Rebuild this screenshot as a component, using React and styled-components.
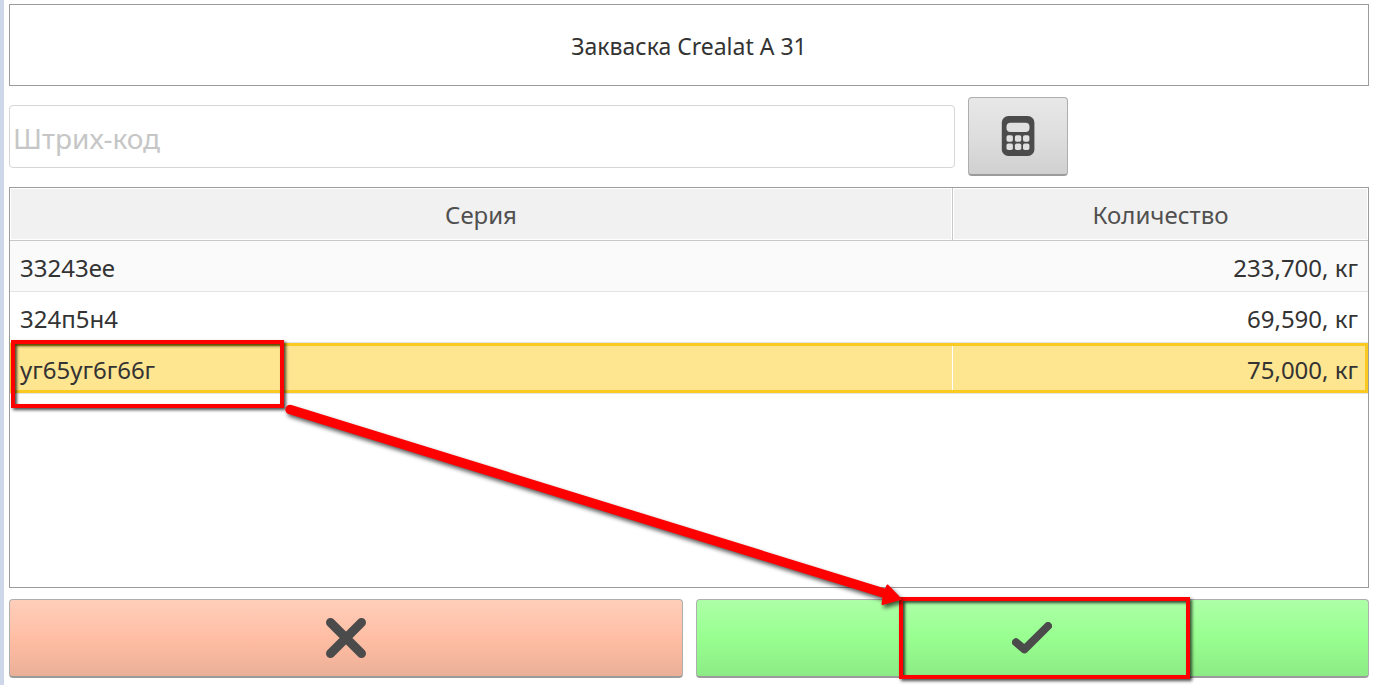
import React from "react";
import styled, { createGlobalStyle } from "styled-components";

const GlobalStyle = createGlobalStyle`
  *, *::before, *::after { box-sizing: border-box; }
  html, body, #root { height: 100%; }
  body {
    margin: 0;
    background: #fff;
    color: #333;
    font-family: "Segoe UI", "Noto Sans", "Open Sans", sans-serif;
  }
`;

const Page = styled.main`
  position: relative;
  display: flex;
  flex-direction: column;
  min-height: 100%;
  padding: 4px 6px 7px 5px;
  border-left: 4px solid #cdd7e9;
  overflow: hidden;
`;

const Title = styled.h1`
  display: flex;
  align-items: center;
  justify-content: center;
  height: 82px;
  margin: 0;
  padding-top: 2px;
  border: 1px solid #9c9c9c;
  font-size: 23px;
  line-height: 30px;
  font-weight: 400;
`;

const SearchBar = styled.div`
  display: flex;
  align-items: center;
  gap: 13px;
  margin: 11px 0;
`;

const BarcodeInput = styled.input`
  flex: 0 1 946px;
  min-width: 0;
  height: 63px;
  padding: 2px 3px 0;
  border: 1px solid #d6d6d6;
  border-radius: 4px;
  font-family: inherit;
  font-size: 28px;
  color: #333;
  outline: none;
  &::placeholder { color: #c6c6c6; opacity: 1; }
`;

const tones = {
  grey: ["#e8e8e8", "#dedede", "#d0d0d0"],
  red: ["#ffceba", "#ffbea4", "#ebaf97"],
  green: ["#adffa7", "#98ff90", "#8ceb85"],
};

const Button = styled.button`
  display: flex;
  align-items: center;
  justify-content: center;
  flex: ${(p) => (p.$wide ? "1 1 0" : "0 0 100px")};
  height: 79px;
  padding: 0;
  border: 1px solid #aeaeae;
  border-bottom: 2px solid #9b9b9b;
  border-radius: 4px;
  background: linear-gradient(
    ${(p) => `${tones[p.$tone][0]}, ${tones[p.$tone][1]} 50%, ${tones[p.$tone][2]}`}
  );
`;

const TablePanel = styled.section`
  flex: 1;
  min-height: 401px;
  border: 1px solid #9c9c9c;
`;

const Table = styled.table`
  width: 100%;
  table-layout: fixed;
  border-collapse: separate;
  border-spacing: 0;
  font-size: 24px;
  line-height: 32px;
`;

const SeriesCol = styled.col`
  width: 943px;
`;

const HeadCell = styled.th`
  height: 53px;
  padding: 1px 0 0;
  background: #f1f1f1;
  border-bottom: 1px solid #c8c8c8;
  box-shadow: inset 0 0 0 1px #fff;
  color: #505050;
  font-weight: 400;
  &:first-child { border-right: 1px solid #c8c8c8; }
`;

const Cell = styled.td`
  height: 51px;
  padding: 4px 10px 0;
  border-bottom: 1px solid #e4e4e4;
  text-align: ${(p) => (p.$number ? "right" : "left")};
`;

const Row = styled.tr`
  background: ${(p) => (p.$striped ? "#fafafa" : "#fff")};
  ${(p) =>
    p.$selected &&
    `
    ${Cell} { background: #fee590; }
    ${Cell}:first-child {
      background: linear-gradient(#fff, #fff) right / 1px 100% no-repeat #fee590;
      box-shadow: inset 3px 3px #fbca22, inset 0 -3px #fbca22;
    }
    ${Cell}:last-child { box-shadow: inset -3px 3px #fbca22, inset 0 -3px #fbca22; }
  `}
`;

const Actions = styled.footer`
  display: flex;
  gap: 13px;
  margin-top: 11px;
`;

const Frame = styled.div`
  position: absolute;
  border: 4px solid #f00;
  pointer-events: none;
  box-shadow: 2px 2px 3px rgba(0, 0, 0, 0.7), inset 2px 2px 3px rgba(0, 0, 0, 0.7);
`;

const SeriesFrame = styled(Frame)`
  top: 340px;
  left: 7px;
  width: 273px;
  height: 68px;
`;

const ConfirmFrame = styled(Frame)`
  top: 597px;
  left: 895px;
  width: 291px;
  height: 82px;
`;

const Arrow = styled.svg`
  position: absolute;
  top: 400px;
  left: 276px;
  pointer-events: none;
  filter: drop-shadow(2px 3px 2px rgba(0, 0, 0, 0.65));
`;

const CalculatorIcon = () => (
  <svg width="34" height="40" viewBox="0 0 34 40" aria-hidden="true">
    <rect x="0.8" width="32.6" height="40" rx="6.5" fill="#4b4b4b" />
    <g fill="#e0e0e0">
      <rect x="5.5" y="6.8" width="23" height="9.2" rx="4" />
      {[19.2, 27.4].map((y) =>
        [5.5, 13.9, 22].map((x) => (
          <rect key={`${x}-${y}`} x={x} y={y} width="6.4" height="6.6" rx="1.8" />
        ))
      )}
    </g>
  </svg>
);

const CrossIcon = () => (
  <svg width="40" height="40" viewBox="0 0 40 40" aria-hidden="true">
    <path d="M4.5 4.5 35.5 35.5M35.5 4.5 4.5 35.5" stroke="#4b4b4b" strokeWidth="9" strokeLinecap="round" />
  </svg>
);

const CheckIcon = () => (
  <svg width="40" height="32" viewBox="0 0 40 32" fill="none" aria-hidden="true">
    <path d="M4 20.3 12.4 27.4 36 4" stroke="#4b4b4b" strokeWidth="8" strokeLinecap="round" strokeLinejoin="round" />
  </svg>
);

const rows = [
  { series: "33243ее", amount: "233,700, кг" },
  { series: "324п5н4", amount: "69,590, кг" },
  { series: "уг65уг6г66г", amount: "75,000, кг", selected: true },
];

export default function App() {
  return (
    <>
      <GlobalStyle />
      <Page>
        <Title>Закваска Crealat A 31</Title>
        <SearchBar>
          <BarcodeInput type="text" placeholder="Штрих-код" aria-label="Штрих-код" />
          <Button type="button" $tone="grey" aria-label="Калькулятор">
            <CalculatorIcon />
          </Button>
        </SearchBar>
        <TablePanel>
          <Table>
            <colgroup>
              <SeriesCol />
              <col />
            </colgroup>
            <thead>
              <tr>
                <HeadCell scope="col">Серия</HeadCell>
                <HeadCell scope="col">Количество</HeadCell>
              </tr>
            </thead>
            <tbody>
              {rows.map((row, i) => (
                <Row key={row.series} $selected={row.selected} $striped={i % 2 === 0}>
                  <Cell>{row.series}</Cell>
                  <Cell $number>{row.amount}</Cell>
                </Row>
              ))}
            </tbody>
          </Table>
        </TablePanel>
        <Actions>
          <Button type="button" $wide $tone="red" aria-label="Отмена">
            <CrossIcon />
          </Button>
          <Button type="button" $wide $tone="green" aria-label="Подтвердить">
            <CheckIcon />
          </Button>
        </Actions>
        <SeriesFrame />
        <ConfirmFrame />
        <Arrow width="640" height="220" viewBox="0 0 640 220" aria-hidden="true">
          <path d="M10 9.5 607 194" stroke="#f00" strokeWidth="9.4" strokeLinecap="round" />
          <path d="M607.5 185.5 620.5 199 602.5 204 604 194Z" fill="#f00" stroke="#f00" strokeWidth="2" strokeLinejoin="round" />
        </Arrow>
      </Page>
    </>
  );
}
